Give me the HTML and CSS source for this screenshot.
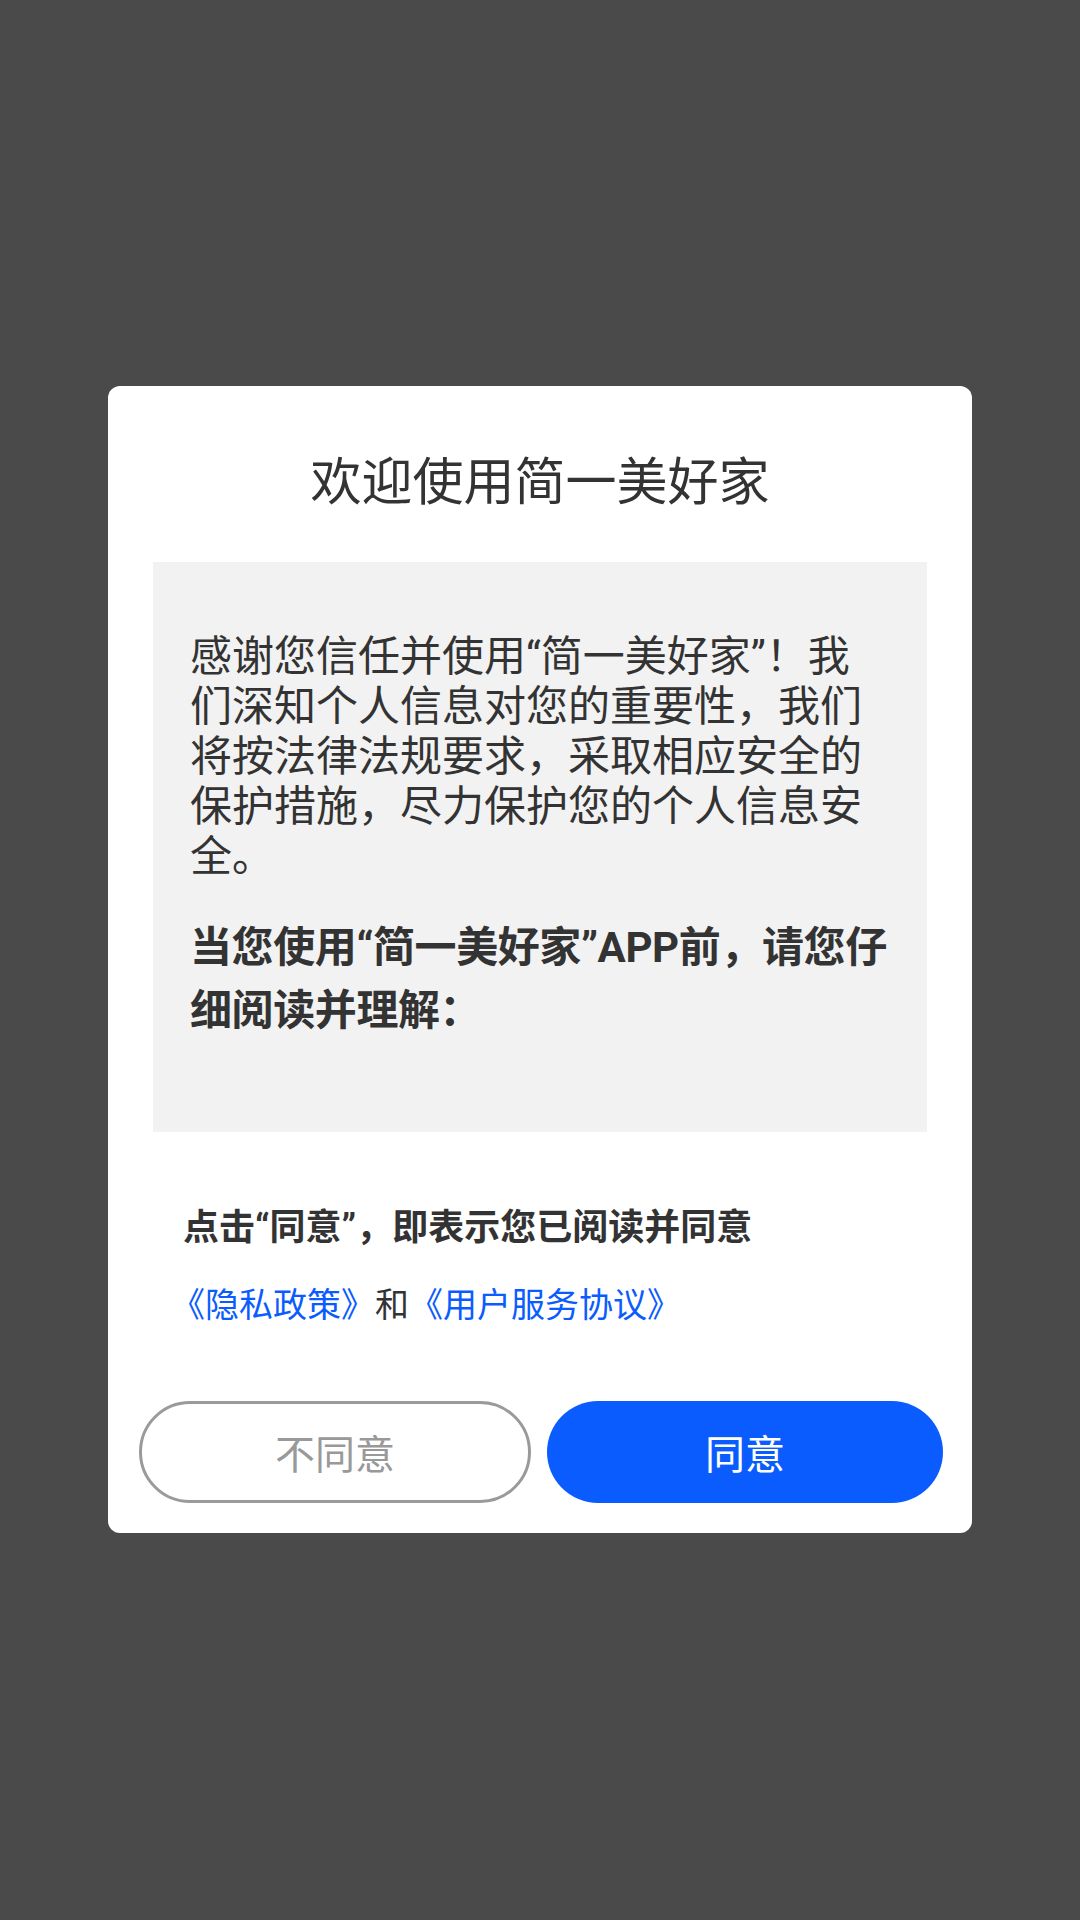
FILE: index.html
```html
<!DOCTYPE html>
<html lang="zh-CN">
<head>
  <meta charset="UTF-8" />
  <meta name="viewport" content="width=device-width, initial-scale=1.0">
  <title>欢迎使用简一美好家</title>
  <link rel="stylesheet" href="styles.css">
</head>
<body>
  <div class="mask">
    <div class="dialog">
      <h1 class="title">欢迎使用简一美好家</h1>

      <div class="notice">
        <p class="notice-text">感谢您信任并使用“简一美好家”！我们深知个人信息对您的重要性，我们将按法律法规要求，采取相应安全的保护措施，尽力保护您的个人信息安全。</p>
        <p class="notice-strong">当您使用“简一美好家”APP前，请您仔细阅读并理解：</p>
      </div>

      <div class="agree">
        <p class="agree-tip">点击“同意”，即表示您已阅读并同意</p>
        <p class="agree-links"><a href="#">《隐私政策》</a>和<a href="#">《用户服务协议》</a></p>
      </div>

      <div class="actions">
        <button class="btn btn-reject">不同意</button>
        <button class="btn btn-accept">同意</button>
      </div>
    </div>
  </div>
</body>
</html>
```

FILE: styles.css
```css
body {
  margin: 0;
  padding: 0;
  background-color: #4a4a4a;
  font-family: Roboto, "Noto Sans CJK SC", sans-serif;
  color: #333;
}

.mask {
  height: 1920px;
  display: flex;
  justify-content: center;
  padding-top: 386px;
  box-sizing: border-box;
}

.dialog {
  width: 864px;
  height: 1147px;
  box-sizing: border-box;
  background: #fff;
  border-radius: 12px;
  padding: 66px 0 30px;
  display: flex;
  flex-direction: column;
}

.title {
  margin: 0;
  font-size: 51px;
  line-height: 62px;
  font-weight: normal;
  text-align: center;
  color: #333;
}

.notice {
  margin: 48px 45px 0;
  height: 570px;
  box-sizing: border-box;
  padding: 70px 36px 0 37px;
  background: #f2f2f2;
  overflow: hidden;
}

.notice-text {
  margin: 0;
  font-size: 42px;
  line-height: 50px;
}

.notice-strong {
  margin: 34px 0 0;
  font-size: 42px;
  line-height: 63px;
  font-weight: bold;
  letter-spacing: -0.4px;
}

.agree {
  padding: 0 40px 0 75px;
  margin-top: 73px;
}

.agree-tip {
  margin: 0;
  font-size: 36px;
  line-height: 46px;
  font-weight: bold;
}

.agree-links {
  margin: 32px 0 0 -12px;
  font-size: 34px;
  line-height: 44px;
}

.agree-links a {
  color: #0a5cff;
  text-decoration: none;
}

.actions {
  margin-top: auto;
  padding: 0 29px 0 31px;
  display: flex;
  gap: 16px;
}

.btn {
  box-sizing: border-box;
  height: 102px;
  border-radius: 51px;
  font-family: Roboto, "Noto Sans CJK SC", sans-serif;
  font-size: 40px;
  cursor: pointer;
}

.btn-reject {
  flex: 0 0 392px;
  background: #fff;
  color: #999;
  border: 3px solid #9a9a9a;
}

.btn-accept {
  flex: 1;
  background: #0a5cff;
  color: #fff;
  border: none;
}
```
